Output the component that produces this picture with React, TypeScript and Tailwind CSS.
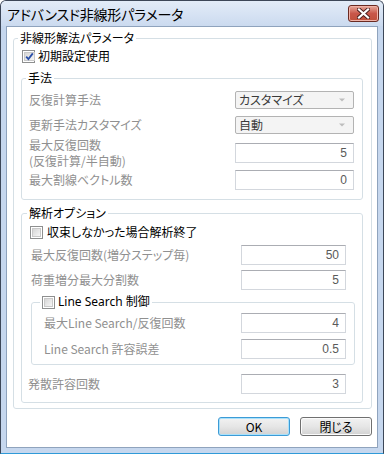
import React from "react";

function Check({ checked }: { checked?: boolean }) {
  return (
    <span className="w-[13px] h-[13px] shrink-0 border border-[#8e8f8f] bg-white p-[1px] flex">
      <span className="flex-1 border border-[#c9c9c9] bg-linear-to-br from-[#d6d6d6] to-[#f6f6f6] flex items-center justify-center">
        {checked && (
          <svg width="9" height="9" viewBox="0 0 9 9">
            <path d="M1.2 4.6 L3.4 7 L7.8 1.4" fill="none" stroke="#2a4fa8" strokeWidth="1.8" />
          </svg>
        )}
      </span>
    </span>
  );
}

function Input({ v, w }: { v: string; w: string }) {
  return (
    <div
      className={`${w} h-[20px] shrink-0 border border-[#d3d7dd] border-t-[#abadb3] bg-white flex items-center justify-end pr-[6px] text-[#5a5a5a] [font-family:'Liberation_Sans_Narrow','Liberation_Sans',sans-serif] text-[12px]`}
    >
      {v}
    </div>
  );
}

function Combo({ v }: { v: string }) {
  return (
    <div className="w-[119px] h-[18px] shrink-0 rounded-[2px] border border-[#b3b3b3] bg-[#f4f4f4] flex items-center justify-between pl-[3px] pr-[8px] text-[#3a3a3a]">
      <span>{v}</span>
      <svg width="6" height="4" viewBox="0 0 6 4">
        <path d="M0 0.5 H6 L3 3.5 Z" fill="#bdbdbd" />
      </svg>
    </div>
  );
}

function Btn({ label, focus }: { label: string; focus?: boolean }) {
  return (
    <div
      className={`w-[72px] h-[19px] rounded-[3px] border ${
        focus ? "border-[#3c9bd6] shadow-[inset_0_0_0_1px_#a9e1fb]" : "border-[#707070] shadow-[inset_0_0_0_1px_#fbfbfb]"
      } bg-linear-to-b from-[#f2f2f2] via-[#e6e6e6] to-[#d2d2d2] flex items-center justify-center text-[12px] text-black`}
    >
      {label}
    </div>
  );
}

export default function App() {
  const gray = "text-[#909090]";
  return (
    <div className="w-[384px] h-[454px] [font-family:'Noto_Sans_CJK_JP','Noto_Sans',sans-serif] [font-feature-settings:'palt'] text-[12px] leading-[16px] bg-white">
      <div className="w-full h-full flex flex-col border border-[#3d4758] border-b-[#2f9ad8] rounded-t-[6px] bg-[#c6d7ee] overflow-hidden">
        {/* title bar */}
        <div className="h-[25px] shrink-0 flex items-start justify-between pl-[6px] pr-[4px] bg-linear-to-b from-[#e3ecf8] to-[#cbdaef]">
          <span className="text-[14px] leading-[20px] mt-[3px] text-black tracking-[-0.2px]">アドバンスド非線形パラメータ</span>
          <div className="mt-[4px] w-[31px] h-[17px] rounded-[3px] border border-[#6a2a22] bg-linear-to-b from-[#e5a99d] via-[#c9574a] to-[#c0503b] shadow-[inset_0_0_0_1px_#f0b3a8] flex items-center justify-center">
            <svg width="13" height="11" viewBox="0 0 13 11">
              <path d="M2 1.5 L11 9.5 M11 1.5 L2 9.5" stroke="#4a2020" strokeWidth="4" strokeLinecap="square" />
              <path d="M2 1.5 L11 9.5 M11 1.5 L2 9.5" stroke="#ffffff" strokeWidth="2.2" strokeLinecap="square" />
            </svg>
          </div>
        </div>
        {/* client */}
        <div className="flex-1 mx-[5px] mb-[5px] border border-[#8fa3bd] bg-white flex flex-col pl-[6px] pr-[5px] pt-[3px]">
          <fieldset className="border border-[#d5dfe5] rounded-[3px]">
            <legend className="ml-[4px] px-[2px] text-black">非線形解法パラメータ</legend>
            <div className="pl-[7px] pr-[8px] pt-[2px] pb-[5px] flex flex-col">
              <div className="h-[16px] flex items-center gap-[3px] ml-[1px] text-black">
                <Check checked />
                <span>初期設定使用</span>
              </div>
              {/* 手法 */}
              <fieldset className="mt-[6px] border border-[#d5dfe5] rounded-[3px]">
                <legend className="ml-[4px] px-[2px] text-black">手法</legend>
                <div className={`pl-[7px] pr-[8px] pt-[2px] pb-[8px] flex flex-col ${gray}`}>
                  <div className="h-[24px] flex items-center justify-between">
                    <span>反復計算手法</span>
                    <Combo v="カスタマイズ" />
                  </div>
                  <div className="h-[25px] flex items-center justify-between">
                    <span>更新手法カスタマイズ</span>
                    <Combo v="自動" />
                  </div>
                  <div className="h-[32px] flex items-center justify-between">
                    <span className="leading-[16px] flex flex-col">
                      <span>最大反復回数</span>
                      <span>(反復計算/半自動)</span>
                    </span>
                    <Input v="5" w="w-[119px]" />
                  </div>
                  <div className="h-[22px] flex items-center justify-between">
                    <span>最大割線ベクトル数</span>
                    <Input v="0" w="w-[119px]" />
                  </div>
                </div>
              </fieldset>
              {/* 解析オプション */}
              <fieldset className="mt-[5px] border border-[#d5dfe5] rounded-[3px]">
                <legend className="ml-[5px] px-[2px] text-black">解析オプション</legend>
                <div className={`pt-[1px] pb-[6px] flex flex-col ${gray}`}>
                  <div className="h-[20px] pl-[8px] flex items-center gap-[4px] text-black">
                    <Check />
                    <span>収束しなかった場合解析終了</span>
                  </div>
                  <div className="h-[25px] pl-[9px] pr-[16px] flex items-center justify-between">
                    <span>最大反復回数(増分ステップ毎)</span>
                    <Input v="50" w="w-[105px]" />
                  </div>
                  <div className="h-[25px] pl-[9px] pr-[16px] flex items-center justify-between">
                    <span>荷重増分最大分割数</span>
                    <Input v="5" w="w-[105px]" />
                  </div>
                  <fieldset className="mt-[2px] ml-[9px] mr-[7px] border border-[#d5dfe5] rounded-[3px]">
                    <legend className="ml-[8px] px-[2px]">
                      <span className="flex items-center gap-[3px] text-black">
                        <Check />
                        <span className="[font-family:'Noto_Sans','Noto_Sans_CJK_JP',sans-serif]">Line Search 制御</span>
                      </span>
                    </legend>
                    <div className="pl-[12px] pr-[8px] pb-[2px] flex flex-col">
                      <div className="h-[26px] flex items-center justify-between">
                        <span>最大Line Search/反復回数</span>
                        <Input v="4" w="w-[105px]" />
                      </div>
                      <div className="h-[26px] flex items-center justify-between">
                        <span>Line Search 許容誤差</span>
                        <Input v="0.5" w="w-[105px]" />
                      </div>
                    </div>
                  </fieldset>
                  <div className="mt-[7px] h-[24px] pl-[6px] pr-[16px] flex items-center justify-between">
                    <span>発散許容回数</span>
                    <Input v="3" w="w-[105px]" />
                  </div>
                </div>
              </fieldset>
            </div>
          </fieldset>
          <div className="mt-[8px] flex justify-end gap-[10px]">
            <Btn label="OK" focus />
            <Btn label="閉じる" />
          </div>
        </div>
      </div>
    </div>
  );
}
